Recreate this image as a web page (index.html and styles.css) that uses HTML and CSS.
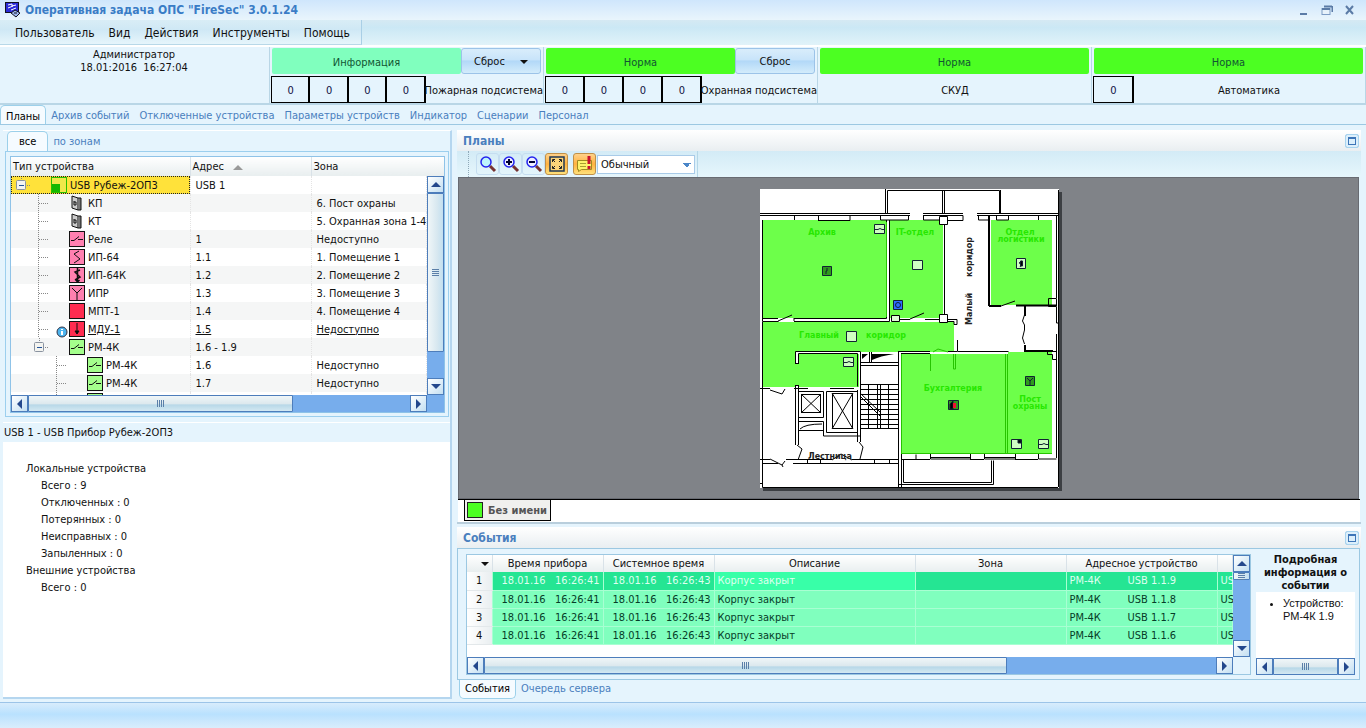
FILE: index.html
```html
<!DOCTYPE html>
<html lang="ru">
  <head>
    <meta charset="utf-8" />
    <title>Оперативная задача ОПС "FireSec" 3.0.1.24</title>
    <link rel="stylesheet" href="styles.css">
  </head>
  <body>
    <!-- Shared icons -->
    <svg class="defs" width="0" height="0">
      <symbol id="relay" viewBox="0 0 14 14"><path d="M1 8.500h3l5-4M8 7.500h5" /></symbol>
      <symbol id="smoke" viewBox="0 0 14 14"><path d="M9 1L4 4l6 5-6 4" /></symbol>
      <symbol id="combo" viewBox="0 0 14 14"><path d="M10 2L5 4l5 5-5 3M7.500 0v13M6 12l1.500 2 2-2" stroke-width="1.500" /></symbol>
      <symbol id="manual" viewBox="0 0 14 14"><path d="M2 2l5 5 5-5M7 7v7" /></symbol>
      <symbol id="down" viewBox="0 0 14 14"><path d="M7 1v11M5 9l2 3 2-3z" fill="#000" /></symbol>
      <symbol id="reader" viewBox="0 0 16 16"><path d="M3 1l6 2v12l-6-2z" fill="#ccc" /><path d="M9 3h3v12H9" fill="#777" /><path d="M5 6v4h2V7H5" /></symbol>
      <symbol id="tee" viewBox="0 0 31 18"><path d="M.5 0v18M1 9.500h9" stroke="#888" stroke-dasharray="1 1" /></symbol>
      <symbol id="minus" viewBox="0 0 31 18"><path d="M5.500 0v4M9 9.500h6" stroke="#888" stroke-dasharray="1 1" /><rect x=".5" y="4.500" width="9" height="9" rx="1" fill="#f4f4f0" stroke="#8a93a0" /><path d="M3 9.500h5" stroke="#23549b" /></symbol>
    </svg>

    <header class="titlebar">
      <svg width="16" height="16" viewBox="0 0 16 16">
        <rect x=".5" y=".5" width="13" height="10" fill="#2b2bd8" stroke="#112" />
        <path d="M3 3l4-1v2l4-1M3 6l5-2M6 8l5-2" fill="none" stroke="#fff" />
        <path d="M6 11l4-3 5 3-4 4z" fill="#9bb4e8" stroke="#112" />
        <path d="M9 11h3" stroke="#112" />
      </svg>
      <h1>Оперативная задача ОПС "FireSec" 3.0.1.24</h1>
      <div class="window-buttons">
        <button aria-label="Свернуть"><svg width="12" height="12"><path d="M2 10h7" stroke="#5b7ba6" stroke-width="2" /></svg></button>
        <button aria-label="Развернуть"><svg width="12" height="12"><path d="M3 2.500h8M11.500 2v6" stroke="#5b7ba6" stroke-width="2" fill="none" /><rect x="1" y="4.500" width="8" height="6" fill="#e7f2fb" stroke="#7d9cc4" /><path d="M1 5h8" stroke="#5b7ba6" stroke-width="2" /></svg></button>
        <button aria-label="Закрыть"><svg width="12" height="12"><path d="M2 2l7 8M9 2l-7 8" stroke="#5b7ba6" stroke-width="2" /></svg></button>
      </div>
    </header>

    <nav class="menubar">
      <div class="menu">
        <button>Пользователь</button>
        <button>Вид</button>
        <button>Действия</button>
        <button>Инструменты</button>
        <button>Помощь</button>
      </div>
    </nav>

    <section class="status">
      <div class="status-cell user">Администратор<br />18.01:2016&nbsp; 16:27:04</div>
      <div class="status-cell">
        <div class="state-row">
          <div class="state info">Информация</div>
          <button class="reset">Сброс <i class="caret"></i></button>
        </div>
        <div class="count-row">
          <b>0</b><b>0</b><b>0</b><b>0</b>
          <span>Пожарная подсистема</span>
        </div>
      </div>
      <div class="status-cell">
        <div class="state-row">
          <div class="state">Норма</div>
          <button class="reset">Сброс</button>
        </div>
        <div class="count-row">
          <b>0</b><b>0</b><b>0</b><b>0</b>
          <span>Охранная подсистема</span>
        </div>
      </div>
      <div class="status-cell">
        <div class="state-row"><div class="state">Норма</div></div>
        <div class="count-row"><span>СКУД</span></div>
      </div>
      <div class="status-cell">
        <div class="state-row"><div class="state">Норма</div></div>
        <div class="count-row"><b>0</b><span>Автоматика</span></div>
      </div>
    </section>

    <nav class="tabs main-tabs">
      <a class="active" href="#">Планы</a>
      <a href="#">Архив событий</a>
      <a href="#">Отключенные устройства</a>
      <a href="#">Параметры устройств</a>
      <a href="#">Индикатор</a>
      <a href="#">Сценарии</a>
      <a href="#">Персонал</a>
    </nav>

    <main>
      <aside class="sidebar">
        <nav class="tabs">
          <a class="active" href="#">все</a>
          <a href="#">по зонам</a>
        </nav>
        <div class="tree-frame">
          <div class="tree">
            <div class="tree-rows">
              <table>
                <colgroup><col class="c-type" /><col class="c-addr" /><col /></colgroup>
                <thead>
                  <tr><th>Тип устройства</th><th>Адрес <i class="sort"></i></th><th>Зона</th></tr>
                </thead>
                <tbody>
                  <tr class="selected"><td><div class="node root"><svg class="line"><use href="#minus" /></svg><i class="icon panel"></i>USB Рубеж-2ОП3</div></td><td>USB 1</td><td></td></tr>
                  <tr><td><div class="node"><svg class="line"><use href="#tee" /></svg><svg class="icon bare"><use href="#reader" /></svg>КП</div></td><td></td><td>6. Пост охраны</td></tr>
                  <tr><td><div class="node"><svg class="line"><use href="#tee" /></svg><svg class="icon bare"><use href="#reader" /></svg>КТ</div></td><td></td><td>5. Охранная зона 1-4</td></tr>
                  <tr><td><div class="node"><svg class="line"><use href="#tee" /></svg><svg class="icon pink"><use href="#relay" /></svg>Реле</div></td><td>1</td><td>Недоступно</td></tr>
                  <tr><td><div class="node"><svg class="line"><use href="#tee" /></svg><svg class="icon pink"><use href="#smoke" /></svg>ИП-64</div></td><td>1.1</td><td>1. Помещение 1</td></tr>
                  <tr><td><div class="node"><svg class="line"><use href="#tee" /></svg><svg class="icon pink"><use href="#combo" /></svg>ИП-64К</div></td><td>1.2</td><td>2. Помещение 2</td></tr>
                  <tr><td><div class="node"><svg class="line"><use href="#tee" /></svg><svg class="icon pink"><use href="#manual" /></svg>ИПР</div></td><td>1.3</td><td>3. Помещение 3</td></tr>
                  <tr><td><div class="node"><svg class="line"><use href="#tee" /></svg><i class="icon red"></i>МПТ-1</div></td><td>1.4</td><td>4. Помещение 4</td></tr>
                  <tr class="linked"><td><div class="node"><svg class="line"><use href="#tee" /></svg><svg class="badge" width="12" height="12"><circle cx="6" cy="6" r="5" fill="#4db4ee" stroke="#334" /><path d="M6 3v1M6 5v4" stroke="#fff" stroke-width="2" /></svg><svg class="icon red"><use href="#down" /></svg><u>МДУ-1</u></div></td><td><u>1.5</u></td><td><u>Недоступно</u></td></tr>
                  <tr><td><div class="node parent"><svg class="line"><use href="#minus" /></svg><svg class="icon lime"><use href="#relay" /></svg>РМ-4К</div></td><td>1.6 - 1.9</td><td></td></tr>
                  <tr><td><div class="node child"><svg class="line"><use href="#tee" /></svg><svg class="icon lime"><use href="#relay" /></svg>РМ-4К</div></td><td>1.6</td><td>Недоступно</td></tr>
                  <tr><td><div class="node child"><svg class="line"><use href="#tee" /></svg><svg class="icon lime"><use href="#relay" /></svg>РМ-4К</div></td><td>1.7</td><td>Недоступно</td></tr>
                  <tr><td><div class="node child"><svg class="line"><use href="#tee" /></svg><svg class="icon lime"><use href="#relay" /></svg></div></td><td></td><td></td></tr>
                </tbody>
              </table>
            </div>
            <div class="vscroll tree-v"><button class="up" aria-label="Вверх"></button><div class="thumb"></div><div class="rest"></div><button class="dn" aria-label="Вниз"></button></div>
            <div class="hscroll"><button class="lt" aria-label="Влево"></button><div class="thumb"></div><div class="rest"></div><button class="rt" aria-label="Вправо"></button></div>
            <div class="corner"></div>
          </div>
        </div>
        <section class="details">
          <h2>USB 1 - USB Прибор Рубеж-2ОП3</h2>
          <dl>
            <dt>Локальные устройства</dt>
            <dd>Всего : 9</dd>
            <dd>Отключенных : 0</dd>
            <dd>Потерянных : 0</dd>
            <dd>Неисправных : 0</dd>
            <dd>Запыленных : 0</dd>
            <dt>Внешние устройства</dt>
            <dd>Всего : 0</dd>
          </dl>
        </section>
      </aside>

      <div class="content">
        <section class="plans">
          <div class="panel-title"><h2>Планы</h2><button class="max" aria-label="Развернуть"></button></div>
          <div class="toolbar">
            <div class="tools">
              <button aria-label="Масштаб"><svg width="18" height="18"><path d="M11 11l5 5" stroke="#733" stroke-width="3" /><circle cx="7" cy="7" r="5" fill="#bdf4fc" stroke="#22e" stroke-width="1.500" /></svg></button>
              <button aria-label="Увеличить"><svg width="18" height="18"><path d="M11 11l5 5" stroke="#733" stroke-width="3" /><circle cx="7" cy="7" r="5" fill="#eef" stroke="#22e" stroke-width="1.500" /><path d="M4 7h6M7 4v6" stroke="#003" stroke-width="2" /></svg></button>
              <button aria-label="Уменьшить"><svg width="18" height="18"><path d="M11 11l5 5" stroke="#733" stroke-width="3" /><circle cx="7" cy="7" r="5" fill="#eef" stroke="#22e" stroke-width="1.500" /><path d="M4 7h6" stroke="#003" stroke-width="2" /></svg></button>
              <button class="on" aria-label="По размеру окна"><svg width="18" height="18"><rect x="2" y="2" width="14" height="14" fill="#fbd47a" stroke="#223a55" stroke-width="1.500" /><path d="M4.500 7V4.500H7M11 4.500h2.500V7M13.500 11v2.500H11M7 13.500H4.500V11M5 5l2 2M13 5l-2 2M13 13l-2-2M5 13l2-2" fill="none" stroke="#222" /></svg></button>
              <i class="sep"></i>
              <button class="on" aria-label="Тревоги"><svg width="18" height="18"><path d="M1.500 5.500h14v9h-10l-3 2v-2h-1z" fill="#fdf36b" stroke="#a08a20" /><path d="M4 8.500h6M4 11.500h6" stroke="#a8a030" /><path d="M13 1v8M13 11v3" stroke="#c8102e" stroke-width="3" /></svg></button>
              <select aria-label="Режим"><option>Обычный</option></select>
            </div>
          </div>
          <div class="canvas">
            <svg class="floor" width="302" height="302" viewBox="0 0 302 302">
              <path d="M3 3h299v299H3z" fill="#3c3f43" />
              <path d="M0 0h299v299H0z" fill="#fff" />
              <!-- Zones -->
              <g fill="#6dff4a">
                <path d="M3 31h124v98H3zM130 31h53v98h-53zM231 31h61v85h-61z" />
                <path d="M3 133h191v30H99v35H3z" />
                <path d="M141 165h106v99H141zM248 163h44v101h-44z" />
              </g>
              <!-- Outer walls -->
              <g class="wall">
                <path d="M125.500 0v24M127.500 24V1.500h112V24M182.500 1v23M184.500 1v23M240.500 1v23M298.500 1v297M0 24.500h150M0 26.500h150M163 24.500h40M163 26.500h40M217 24.500h81M217 26.500h81" />
                <path d="M34.500 26v5M58.500 31.500v-5M58 31.500h32v-5M120.500 26v5h28v-5M163.500 26v5h19M187 31.500h16v-5M218.500 26v5h11M236.500 26v5h12v-5M278.500 26v5" />
                <path d="M2.500 31v101.500h16M34 132.500h95.500V31M34 129.500h92.500V31M184.500 34v92M2 129.500h16M137 130.500h13M165 130.500h14" />
                <path d="M18 132l14-6M34 129v3M150 130l14-6" />
                <path d="M179.500 27.500h8v8h-8zM179.500 125.500h8v8h-8zM187 130.500h10v5h-3v-3h-7" fill="#fff" />
                <path d="M131.500 126.500h8v6h-8z" fill="#dfffd6" />
                <path d="M296.500 27v82M288.500 109.500h8v8h-8z" />
                <path d="M241 117l14-5M296.500 118v16h2M264.500 126l-2 6 2 4M264.500 155l-2-6 2-8M264.500 136v5" />
                <path d="M197.500 151v11.500h51M287.500 162.500h9v8h-4v-5h-5zM296.500 145v124" />
              </g>
              <g class="wall thick">
                <path d="M229 26v91M229 117h12M256 116.500h40M265 117v10M265 156v6h28" />
              </g>
              <!-- Hall -->
              <path d="M35 163h64v2H39v9h-4zM35 196h4v2h-4z" fill="#fff" />
              <g class="wall">
                <path d="M35.500 174v-11.500h65M38.500 174v-9.500h59v33M35 174.500h4M35.500 196v60M38.500 196v60M35 196.500h4M100.500 163v90M97.500 201v52M138.500 163v135M100 176.500h38M100 173.500h38M109.500 163v10M111.500 163v10M141.500 165v133" />
                <path d="M2.500 133v165.500H298M34 199.500h14M0 199.500h10M10 201l12 4 3-5M70 199.500h24" />
                <path d="M38.500 202.500h25v26h-25zM41.500 205.500h19v18h-19zM41 205l20 19M61 205l-20 19" />
                <path d="M66.500 202.500h31v41h-31zM72.500 204.500h20v35h-20zM72 204l21 36M93 204l-21 36" />
                <path d="M38.500 232.500h25v9h-25zM40 240q5-5 22-5M63.500 241v6h37" />
                <path d="M100 195.500h38M100 200.500h38M100 205.500h38M100 210.500h38M100 215.500h38M100 220.500h38M100 225.500h38M100 230.500h38M100 235.500h38M100 239.500h38M108.500 195v44M117.500 195v44M120.500 195v44M128.500 195v44M100 204l20 19M100 207l20 20" />
                <path d="M37 256l5 4-4 11M99 253l4 5-3 12M0 270.500h10M26 270.500h46M92 270.500h46M2 274.500h16M33 274.500h105M10 270l12 6 3-4M22 276l1 2M72 271l9-6 11 6M47.500 270v4M60.500 270v4M114.500 270v4M129.500 270v4M0 294.500h2" />
              </g>
              <path d="M102 165h6l-6 5zM112 165h22q-14 2-22 6z" />
              <!-- Rooms at the bottom -->
              <g class="wall">
                <path d="M138 162.500h32M188 162.500h9M141 164.500h29M141 270.500h15v-5M170.500 265v5h40v-5M224.500 265v5h31v-5M278.500 265v5h18M156 270.500h14M210 270.500h14M255 270.500h23M170 268.500h40M224 268.500h31" />
                <path d="M143.500 271v22.500h88v-22M138 295.500h95.500v-24" />
              </g>
              <path d="M245.500 165v99M247.500 165v99M141.500 165v99M141 264.500h151M170.500 165v17M193.500 165v15h2v-15M173 163l5-3 10 3M126.500 33v95" fill="none" stroke="#26c400" />
              <!-- Devices -->
              <g class="device">
                <path d="M114.500 35.500h10v9h-10zM152.500 71.500h10v9h-10zM256.500 69.500h9v10h-9zM86.500 142.500h10v10h-10zM83.500 168.500h10v9h-10zM251.500 250.500h10v9h-10zM278.500 250.500h10v9h-10z" fill="#cfffc2" />
                <path d="M62.500 77.500h9v9h-9zM265.500 187.500h9v9h-9zM188.500 211.500h10v9h-10z" fill="#2f9a1c" />
                <path d="M133.500 111.500h9v9h-9z" fill="#2d6cff" />
                <path d="M115 40.500h3l2-1 2 1h2M84 173.500h3l2-1 2 1h2M279 255.500h3l2-1 2 1h2M267 189l3 3 3-3M270 192v4M67 79v3h-1v3M262 72l-3 2 3 1-2 3" fill="none" />
                <circle cx="138" cy="116" r="2.500" fill="none" />
                <path d="M258 251h3v3h-3zM190 220v-5l3-3v8zM260.500 72h2v5h-2z" />
                <path d="M194.500 214v5" stroke="#f01030" stroke-width="3" />
              </g>
              <g class="zone-name">
                <text x="62" y="46">Архив</text>
                <text x="155" y="46">IT-отдел</text>
                <text x="260" y="46">Отдел</text>
                <text x="261" y="53">логистики</text>
                <text x="59" y="149">Главный</text>
                <text x="126" y="149">коридор</text>
                <text x="193" y="202">Бухгалтерия</text>
                <text x="270" y="213">Пост</text>
                <text x="270" y="220">охраны</text>
              </g>
              <g class="zone-name dark">
                <text x="70" y="270">Лестница</text>
                <text transform="translate(212 68) rotate(-90)">коридор</text>
                <text transform="translate(212 120) rotate(-90)">Малый</text>
              </g>
            </svg>
          </div>
          <div class="plan-tabs"><button><i></i>Без имени</button></div>
        </section>

        <section class="events">
          <div class="panel-title"><h2>События</h2><button class="max" aria-label="Развернуть"></button></div>
          <div class="events-body">
            <div class="grid">
              <div class="grid-rows">
                <table>
                  <colgroup><col class="e-num" /><col class="e-time" /><col class="e-time" /><col class="e-text" /><col class="e-zone" /><col class="e-zone" /><col /></colgroup>
                  <thead>
                    <tr><th><i class="caret"></i></th><th>Время прибора</th><th>Системное время</th><th>Описание</th><th>Зона</th><th>Адресное устройство</th><th></th></tr>
                  </thead>
                  <tbody>
                    <tr class="current"><th>1</th><td>18.01.16&nbsp;&nbsp; 16:26:41</td><td>18.01.16&nbsp;&nbsp; 16:26:43</td><td>Корпус закрыт</td><td></td><td><span>РМ-4К</span>USB 1.1.9</td><td>US</td></tr>
                    <tr><th>2</th><td>18.01.16&nbsp;&nbsp; 16:26:41</td><td>18.01.16&nbsp;&nbsp; 16:26:43</td><td>Корпус закрыт</td><td></td><td><span>РМ-4К</span>USB 1.1.8</td><td>US</td></tr>
                    <tr><th>3</th><td>18.01.16&nbsp;&nbsp; 16:26:41</td><td>18.01.16&nbsp;&nbsp; 16:26:43</td><td>Корпус закрыт</td><td></td><td><span>РМ-4К</span>USB 1.1.7</td><td>US</td></tr>
                    <tr><th>4</th><td>18.01.16&nbsp;&nbsp; 16:26:41</td><td>18.01.16&nbsp;&nbsp; 16:26:43</td><td>Корпус закрыт</td><td></td><td><span>РМ-4К</span>USB 1.1.6</td><td>US</td></tr>
                  </tbody>
                </table>
              </div>
              <div class="vscroll grid-v"><button class="up" aria-label="Вверх"></button><div class="thumb"></div><div class="rest"></div><button class="dn" aria-label="Вниз"></button></div>
              <div class="hscroll grid-h"><button class="lt" aria-label="Влево"></button><div class="thumb"></div><div class="rest"></div><button class="rt" aria-label="Вправо"></button></div>
            </div>
            <div class="event-info">
              <h3>Подробная информация о событии</h3>
              <ul><li>Устройство: РМ-4К 1.9</li></ul>
              <div class="hscroll full"><button class="lt" aria-label="Влево"></button><div class="thumb"></div><button class="rt" aria-label="Вправо"></button></div>
            </div>
          </div>
          <nav class="tabs bottom">
            <a class="active" href="#">События</a>
            <a href="#">Очередь сервера</a>
          </nav>
        </section>
      </div>
    </main>
    <footer></footer>
  </body>
</html>
```
FILE: styles.css
```css
* {
  box-sizing: border-box;
}

body {
  display: flex;
  flex-direction: column;
  height: 100vh;
  margin: 0;
  overflow: hidden;
  background-color: #e5f4fd;
  color: #111;
  font-family: "DejaVu Sans Condensed", "DejaVu Sans", sans-serif;
  font-size: 11px;
  line-height: 13px;
}

button,
select {
  margin: 0;
  padding: 0;
  border: none;
  background: none;
  color: inherit;
  font: inherit;
}

h1,
h2,
h3 {
  margin: 0;
  font-size: 12px;
}

.defs {
  position: absolute;
}

/* Title and menu */
.titlebar {
  display: flex;
  align-items: center;
  gap: 4px;
  height: 20px;
  padding: 0 10px 0 5px;
  background: linear-gradient(#cfe6fc, #e9f5fc);
}

h1 {
  flex: 1;
  color: #3a7cc6;
}

.window-buttons {
  display: flex;
  gap: 11px;
}

.window-buttons button {
  display: flex;
}

.menubar {
  height: 27px;
  border-bottom: 2px solid #fff;
  background: linear-gradient(#d5e9f3, #cbe8f5 30%, #e1f3f9);
}

.menu {
  display: flex;
  align-items: center;
  gap: 14px;
  width: 362px;
  height: 25px;
  padding: 2px 0 0 15px;
  border-right: 1px solid #a9cfe6;
  border-bottom: 1px solid #b8d8e8;
  background: linear-gradient(#d9edf6, #cfe8f5 40%, #e6f5fb);
  font-size: 12px;
}

/* Subsystem states */
.status {
  display: grid;
  grid-template-columns: 270px repeat(4, minmax(0, 1fr));
  height: 58px;
  border-bottom: 2px solid #b9d6e6;
}

.status-cell {
  border-right: 1px solid #b9d6e6;
  padding: 1px 2px 0 1px;
}

.user {
  text-align: center;
}

.state-row {
  display: flex;
  height: 26px;
  padding-left: 1px;
}

.state {
  flex: 1;
  border-radius: 2px;
  background-color: #4cff22;
  color: #153;
  line-height: 29px;
  text-align: center;
}

.info {
  background-color: #80ffbe;
}

.reset {
  width: 80px;
  padding-top: 1px;
  border: 1px solid #9cc3e8;
  border-radius: 3px;
  background: linear-gradient(#d9edfb, #c8e4fa 45%, #b2d8f8 50%, #d3ecfb);
}

.caret {
  display: inline-block;
  margin-left: 12px;
  border: 4px solid transparent;
  border-top-color: #111;
  border-bottom: none;
  vertical-align: middle;
}

.count-row {
  display: flex;
  align-items: center;
  height: 27px;
  margin: 2px -2px 0 0;
}

.count-row b {
  width: 41px;
  height: 27px;
  margin-right: -1px;
  border: 1px solid #000;
  box-shadow: inset -1px 0 0 #000;
  color: #114;
  font-weight: normal;
  line-height: 27px;
  text-align: center;
}

.count-row span {
  flex: 1;
  padding-top: 1px;
  text-align: center;
  white-space: nowrap;
}

/* Tabs */
.tabs {
  display: flex;
  height: 20px;
}

.tabs a {
  padding: 1px 5px 0;
  color: #4a7fbe;
  line-height: 20px;
  text-decoration: none;
}

.tabs .active {
  border: 1px solid #9cd0ea;
  border-bottom: none;
  border-radius: 5px 5px 0 0;
  background-color: #f5fbff;
  color: #000;
}

.main-tabs {
  flex: none;
  border-bottom: 1px solid #9cc8e2;
}

main {
  display: grid;
  grid-template-columns: 452px minmax(0, 1fr);
  column-gap: 5px;
  flex: 1;
  min-height: 0;
  padding: 5px 5px 3px 0;
}

/* Device tree */
.sidebar {
  display: flex;
  flex-direction: column;
  min-height: 0;
  margin-left: 3px;
  border-top: 1px solid #fff;
  border-right: 2px solid #b5d6ef;
  border-bottom: 2px solid #b5d6ef;
}

.sidebar .tabs {
  padding-left: 4px;
}

.sidebar .active {
  padding: 0 11px;
}

.tree-frame {
  margin: 0 1px 0 2px;
  padding: 4px 3px 3px 4px;
  border: 1px solid #9ccfee;
}

.tree {
  display: grid;
  grid-template-columns: minmax(0, 1fr) 17px;
  grid-template-rows: 238px 17px;
  border: 1px solid #8fc3e8;
  background: linear-gradient(#fff, #e8eeef) top / 100% 19px no-repeat #fff;
}

.tree-rows {
  overflow: hidden;
}

table {
  width: 100%;
  border-collapse: collapse;
  table-layout: fixed;
}

thead th {
  height: 19px;
  padding: 0 2px;
  border-right: 1px solid #d9e2e8;
  background: linear-gradient(#fff, #e8eeef);
  font-weight: normal;
}

.tree th {
  text-align: left;
  white-space: nowrap;
}

.tree th:last-child {
  border-right: none;
}

.c-type {
  width: 179px;
}

.c-addr {
  width: 121px;
}

.tree td {
  height: 18px;
  padding: 0 0 0 5px;
  border-right: 1px dotted #e4e4e4;
  background-color: #fff;
  white-space: nowrap;
}

.tree td:first-child {
  padding: 0;
}

.tree tr:nth-child(even) td {
  background-color: #f5f6f6;
}

.tree .selected td:first-child {
  background-color: #ffe23a;
  outline: 1px dotted #222;
  outline-offset: -1px;
}

.sort {
  display: inline-block;
  margin-left: 6px;
  border: 5px solid transparent;
  border-top: none;
  border-bottom-color: #999;
}

.node {
  display: flex;
  align-items: center;
  height: 18px;
  padding-left: 27px;
}

.root {
  padding-left: 5px;
}

.root .line {
  margin-right: 4px;
}

.parent {
  padding-left: 23px;
}

.parent .line {
  margin-right: 4px;
}

.child {
  padding-left: 45px;
}

.line {
  flex: none;
  width: 31px;
  height: 18px;
}

.icon {
  flex: none;
  width: 16px;
  height: 16px;
  margin-right: 3px;
  border: 1px solid #111;
  fill: none;
  stroke: #111;
}

.bare {
  border: none;
}

.pink {
  background-color: #ff80b0;
}

.red {
  background-color: #ff2c50;
}

.lime {
  background-color: #a4ff8c;
}

.panel {
  border-color: #2bc000;
  background: linear-gradient(#14b800, #14b800) left bottom / 8px 8px no-repeat #f0e84a;
}

.badge {
  flex: none;
  align-self: flex-end;
  margin-left: -13px;
  margin-right: 1px;
}

/* Scrollbars */
.vscroll,
.hscroll {
  display: flex;
  background-color: #77adec;
}

.vscroll {
  flex-direction: column;
  width: 17px;
}

.hscroll {
  height: 17px;
}

.vscroll button,
.hscroll button {
  display: flex;
  align-items: center;
  justify-content: center;
  flex: none;
  width: 17px;
  height: 17px;
  border: 1px solid #4d7dbb;
  background: linear-gradient(135deg, #fff, #c3dff2);
}

.vscroll button::before,
.hscroll button::before {
  content: "";
  border: 5px solid transparent;
}

.up::before {
  border-top: none !important;
  border-bottom-color: #23478c !important;
}

.dn::before {
  border-bottom: none !important;
  border-top-color: #23478c !important;
}

.lt::before {
  border-left: none !important;
  border-right-color: #23478c !important;
}

.rt::before {
  border-right: none !important;
  border-left-color: #23478c !important;
}

.thumb {
  display: flex;
  align-items: center;
  justify-content: center;
  border: 1px solid #4d7dbb;
  border-radius: 1px;
}

.vscroll .thumb {
  background: linear-gradient(90deg, #f0f6f8, #d8e8f0 60%, #c3dff0);
}

.hscroll .thumb {
  background: linear-gradient(#f0f6f8, #dde9ee 50%, #b8d8e8 60%, #d3e8f2);
}

.thumb::after {
  content: "";
  width: 7px;
  height: 7px;
  background: repeating-linear-gradient(90deg, #5b7fa8 0 1px, transparent 1px 2px);
}

.vscroll .thumb::after {
  background: repeating-linear-gradient(#5b7fa8 0 1px, transparent 1px 2px);
}

.rest {
  flex: 1;
}

.tree-v {
  margin-top: 19px;
}

.tree-v .thumb {
  flex: 6;
}

.hscroll .thumb {
  flex: 9;
}

.hscroll .rest {
  flex: 4;
}

.grid-h .thumb {
  flex: 10;
}

.corner {
  background-color: #77adec;
}

/* Device details */
.details {
  flex: 1;
  margin-top: 5px;
  border-top: 1px solid #fff;
  background-color: #fff;
}

.details h2 {
  padding: 3px 1px;
  background-color: #e5f4fd;
  font-size: 11px;
  font-weight: normal;
}

dl {
  margin: 18px 23px;
  line-height: 17px;
}

dd {
  margin-left: 15px;
}

/* Plans */
.content {
  display: flex;
  flex-direction: column;
  min-height: 0;
}

.panel-title {
  display: flex;
  align-items: center;
  justify-content: space-between;
  height: 21px;
  padding: 1px 2px 0 6px;
  background: linear-gradient(#fff, #e9eef1);
  color: #4a7fbe;
}

.max {
  width: 14px;
  height: 14px;
  border: 1px solid #a8d3ee;
  border-radius: 2px;
  background: linear-gradient(#3d75b8, #3d75b8) 2px 2px / 8px 2px no-repeat #dceffb;
  box-shadow: inset 0 0 0 2px #dceffb, inset 0 0 0 3px #3d75b8;
}

.plans {
  display: flex;
  flex-direction: column;
  flex: 1;
  min-height: 0;
  border-bottom: 2px solid #b9cedc;
}

.toolbar {
  display: flex;
  height: 26px;
  padding-left: 11px;
  background: linear-gradient(#d3ebf6, #e6f6fc);
}

.tools {
  display: flex;
  align-items: center;
  padding: 0 2px 0 7px;
  border-right: 1px solid #b5d7e8;
  border-left: 1px dotted #8fa9b8;
}

.tools button {
  display: flex;
  align-items: center;
  justify-content: center;
  width: 23px;
  height: 22px;
  border: 1px solid #c5ddf0;
  border-radius: 3px;
}

.tools .on {
  border-color: #c09048;
  background: linear-gradient(#ffd28a, #ffb240 50%, #ffe07a);
}

.sep {
  width: 5px;
}

select {
  width: 98px;
  height: 19px;
  margin-left: 1px;
  padding: 0 3px;
  border: 1px solid #a9cbe8;
  appearance: none;
  background: conic-gradient(from 315deg at 50% 100%, #4a86c8 90deg, transparent 90deg) 85px 7px / 8px 4px no-repeat, #fff;
}

.canvas {
  display: flex;
  align-items: center;
  justify-content: center;
  flex: 1;
  min-height: 0;
  margin: 0 2px 0 1px;
  padding: 4px 0 0 4px;
  border: 1px solid #686b72;
  background-color: #808388;
}

.floor {
  flex: none;
}

.wall {
  fill: none;
  stroke: #000;
}

.thick {
  stroke-width: 2;
}

.device {
  stroke: #123;
}

.zone-name {
  fill: #27e800;
  font-family: "DejaVu Sans", sans-serif;
  font-size: 8px;
  font-weight: bold;
  text-anchor: middle;
}

.dark {
  fill: #222;
}

.plan-tabs {
  height: 23px;
  margin: 0 1px;
  padding-left: 6px;
  border-top: 1px solid #000;
  background-color: #fff;
}

.plan-tabs button {
  display: flex;
  align-items: center;
  gap: 5px;
  height: 21px;
  padding: 0 3px 0 2px;
  border: 1px solid #000;
  border-top: none;
  background-color: #f0f0ee;
  color: #555;
  font-weight: bold;
}

.plan-tabs i {
  width: 16px;
  height: 16px;
  border: 1px solid #222;
  background-color: #4cff22;
}

/* Events */
.events {
  flex: none;
  margin-top: 3px;
}

.events-body {
  display: flex;
  gap: 5px;
  height: 132px;
  margin-right: 1px;
  padding: 4px 4px 4px 8px;
  border: 1px solid #9cc8e2;
}

.grid {
  display: grid;
  grid-template-columns: minmax(0, 1fr) 17px;
  grid-template-rows: minmax(0, 1fr) 17px;
  flex: 1;
  min-width: 0;
  margin-top: 1px;
  border: 1px solid #9cc8e2;
}

.grid-rows {
  overflow: hidden;
  background-color: #fff;
}

.grid thead th {
  height: 17px;
  text-align: center;
}

.grid tbody th {
  border-bottom: 1px solid #e3e8ea;
  background: linear-gradient(90deg, #fff, #e9eef0);
  font-weight: normal;
}

.grid td {
  height: 18px;
  padding: 0 3px;
  border: 1px solid #a8ffd2;
  border-top: none;
  background-color: #80ffbe;
  color: #063c28;
  white-space: nowrap;
}

.grid td:nth-child(2),
.grid td:nth-child(3) {
  text-align: right;
}

.grid td span {
  display: inline-block;
  width: 58px;
}

.grid .current td {
  background-color: #25e593;
  color: #dffff0;
}

.grid .current td:nth-child(4) {
  background-color: #38ffa8;
}

.grid .caret {
  margin-left: 12px;
}

.e-num {
  width: 25px;
}

.e-time {
  width: 111px;
}

.e-text {
  width: 201px;
}

.e-zone {
  width: 151px;
}

.grid-v .thumb {
  height: 8px;
}

.event-info {
  display: flex;
  flex-direction: column;
  flex: none;
  width: 99px;
  background-color: #fff;
}

.event-info h3 {
  padding: 0 5px;
  background-color: #e5f4fd;
  font-size: 11px;
  text-align: center;
}

ul {
  flex: 1;
  margin: 5px 0 0;
  padding-left: 27px;
  font-family: "Liberation Sans", Arial, sans-serif;
}

.full .thumb {
  flex: 1;
}

.bottom {
  height: 19px;
  padding-left: 2px;
}

.bottom a {
  padding-top: 0;
  line-height: 17px;
}

.bottom .active {
  border: 1px solid #9cd0ea;
  border-top: none;
  border-radius: 0 0 5px 5px;
}

footer {
  height: 26px;
  border-top: 1px solid #9cc4e8;
  background: linear-gradient(#d8ecfc, #b9e1fe 45%, #d9edfc);
}
```
